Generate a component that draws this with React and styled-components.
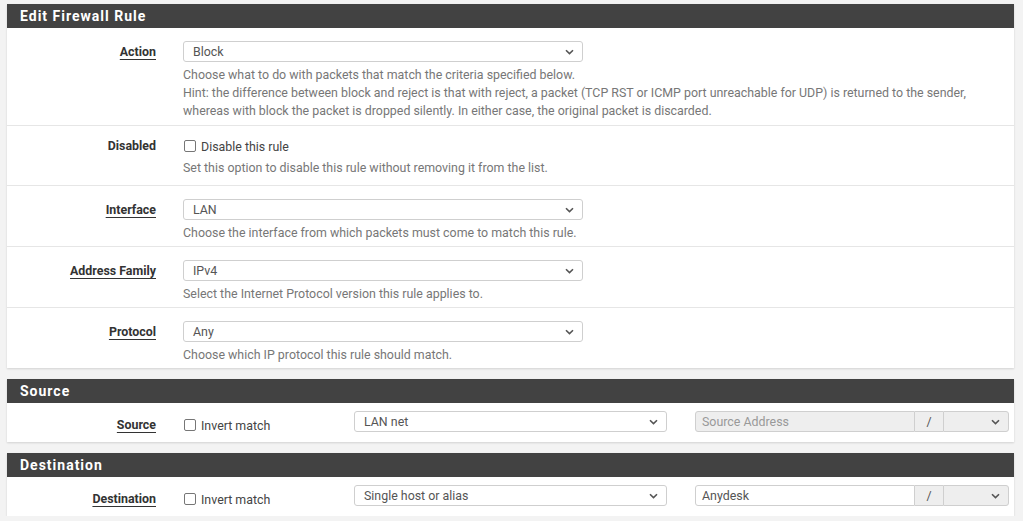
import React from "react";
import styled, { createGlobalStyle } from "styled-components";

const Global = createGlobalStyle`
  html, body { margin: 0; padding: 0; background: #f3f3f3; }
  body { font-family: Roboto, "Liberation Sans", Arial, sans-serif; font-size: 12.4px; color: #333; }
`;

const Page = styled.div`
  padding: 4px 9px 0 7px;
  display: flex;
  flex-direction: column;
  gap: 11px;
`;

const Panel = styled.section`
  background: #fff;
  box-shadow: 0 1px 2px rgba(0, 0, 0, 0.14);
`;

const PanelHeading = styled.h2`
  margin: 0;
  height: 24px;
  line-height: 24px;
  background: #424242;
  color: #fff;
  font-size: 14px;
  font-weight: 700;
  padding-left: 13px;
  letter-spacing: 1px;
`;

const Row = styled.div`
  display: grid;
  grid-template-columns: 150px 1fr;
  column-gap: 26px;
  padding: ${(p) => p.$pad || "13px 0 4px"};
  border-top: ${(p) => (p.$first ? "none" : "1px solid #e6e6e6")};
`;

const Label = styled.div`
  text-align: right;
  font-weight: 700;
  line-height: ${(p) => p.$lh || 21}px;
  color: #333;
  padding-right: 1px;
  padding-top: ${(p) => p.$top || 0}px;
  span {
    text-decoration: ${(p) => (p.$link ? "underline" : "none")};
    text-underline-offset: 3px;
    text-decoration-thickness: 1px;
  }
`;

const Control = styled.div`
  display: flex;
  flex-direction: column;
`;

const SelectBox = styled.div`
  box-sizing: border-box;
  width: ${(p) => p.$w}px;
  height: 21px;
  border: 1px solid #cfcfcf;
  border-radius: ${(p) => p.$radius || "3px"};
  background: ${(p) => (p.$disabled ? "#eee" : "#fff")};
  display: flex;
  align-items: center;
  justify-content: space-between;
  padding: 0 8px 0 9px;
  color: #555;
`;

const Help = styled.div`
  margin-top: 4px;
  line-height: 18px;
  color: #777;
`;

const CheckLine = styled.label`
  display: flex;
  align-items: center;
  gap: 5px;
  height: 18px;
  color: #444;
  margin-top: ${(p) => p.$top || 0}px;
`;

const Box = styled.span`
  box-sizing: border-box;
  width: 12px;
  height: 12px;
  border: 1px solid #767676;
  border-radius: 2px;
  background: #fff;
  margin-left: 1px;
`;

const FlexRow = styled.div`
  box-sizing: border-box;
  display: flex;
  align-items: flex-start;
  height: 39px;
  padding-top: 8px;
`;

const Cell = styled.div`
  width: ${(p) => p.$w}px;
  margin-left: ${(p) => p.$ml || 0}px;
  flex: none;
`;

const Group = styled.div`
  display: flex;
  width: 314px;
  height: 21px;
`;

const GroupInput = styled.div`
  box-sizing: border-box;
  width: 220px;
  height: 21px;
  border: 1px solid #cfcfcf;
  border-radius: 3px 0 0 3px;
  background: ${(p) => (p.$disabled ? "#eee" : "#fff")};
  color: ${(p) => (p.$disabled ? "#999" : "#555")};
  padding-left: 6px;
  line-height: 19px;
`;

const Addon = styled.div`
  box-sizing: border-box;
  width: 28px;
  height: 21px;
  border-top: 1px solid #cfcfcf;
  border-bottom: 1px solid #cfcfcf;
  background: #eee;
  color: #555;
  text-align: center;
  line-height: 19px;
`;

const Chevron = () => (
  <svg width="9" height="6" viewBox="0 0 9 6">
    <path d="M1 1.2 L4.5 4.6 L8 1.2" fill="none" stroke="#555" strokeWidth="1.6" />
  </svg>
);

const Select = ({ value, w, disabled, radius }) => (
  <SelectBox $w={w} $disabled={disabled} $radius={radius}>
    <span>{value}</span>
    <Chevron />
  </SelectBox>
);

const Checkbox = ({ text, top }) => (
  <CheckLine $top={top}>
    <Box />
    <span>{text}</span>
  </CheckLine>
);

const AddressRow = ({ label, select, addr, disabled }) => (
  <FlexRow>
    <Cell $w={150}>
      <Label $link $top={5} $lh={18}>
        <span>{label}</span>
      </Label>
    </Cell>
    <Cell $w={171} $ml={26}>
      <Checkbox text="Invert match" top={5} />
    </Cell>
    <Cell $w={313}>
      <Select value={select} w={313} />
    </Cell>
    <Cell $w={314} $ml={28}>
      <Group>
        <GroupInput $disabled={disabled}>{addr}</GroupInput>
        <Addon>/</Addon>
        <Select value="" w={66} disabled radius="0 3px 3px 0" />
      </Group>
    </Cell>
  </FlexRow>
);

export default function App() {
  return (
    <>
      <Global />
      <Page>
        <Panel>
          <PanelHeading>Edit Firewall Rule</PanelHeading>
          <Row $first $pad="13px 0 5px">
            <Label $link>
              <span>Action</span>
            </Label>
            <Control>
              <Select value="Block" w={400} />
              <Help>
                Choose what to do with packets that match the criteria specified below.
                <br />
                Hint: the difference between block and reject is that with reject, a packet (TCP RST or ICMP port unreachable for UDP) is returned to the sender,
                <br />
                whereas with block the packet is dropped silently. In either case, the original packet is discarded.
              </Help>
            </Control>
          </Row>
          <Row $pad="11px 0 8px">
            <Label $lh={18}>
              <span>Disabled</span>
            </Label>
            <Control>
              <Checkbox text="Disable this rule" />
              <Help>Set this option to disable this rule without removing it from the list.</Help>
            </Control>
          </Row>
          <Row>
            <Label $link>
              <span>Interface</span>
            </Label>
            <Control>
              <Select value="LAN" w={400} />
              <Help>Choose the interface from which packets must come to match this rule.</Help>
            </Control>
          </Row>
          <Row>
            <Label $link>
              <span>Address Family</span>
            </Label>
            <Control>
              <Select value="IPv4" w={400} />
              <Help>Select the Internet Protocol version this rule applies to.</Help>
            </Control>
          </Row>
          <Row>
            <Label $link>
              <span>Protocol</span>
            </Label>
            <Control>
              <Select value="Any" w={400} />
              <Help>Choose which IP protocol this rule should match.</Help>
            </Control>
          </Row>
        </Panel>
        <Panel>
          <PanelHeading>Source</PanelHeading>
          <AddressRow label="Source" select="LAN net" addr="Source Address" disabled />
        </Panel>
        <Panel>
          <PanelHeading>Destination</PanelHeading>
          <AddressRow label="Destination" select="Single host or alias" addr="Anydesk" />
        </Panel>
      </Page>
    </>
  );
}
